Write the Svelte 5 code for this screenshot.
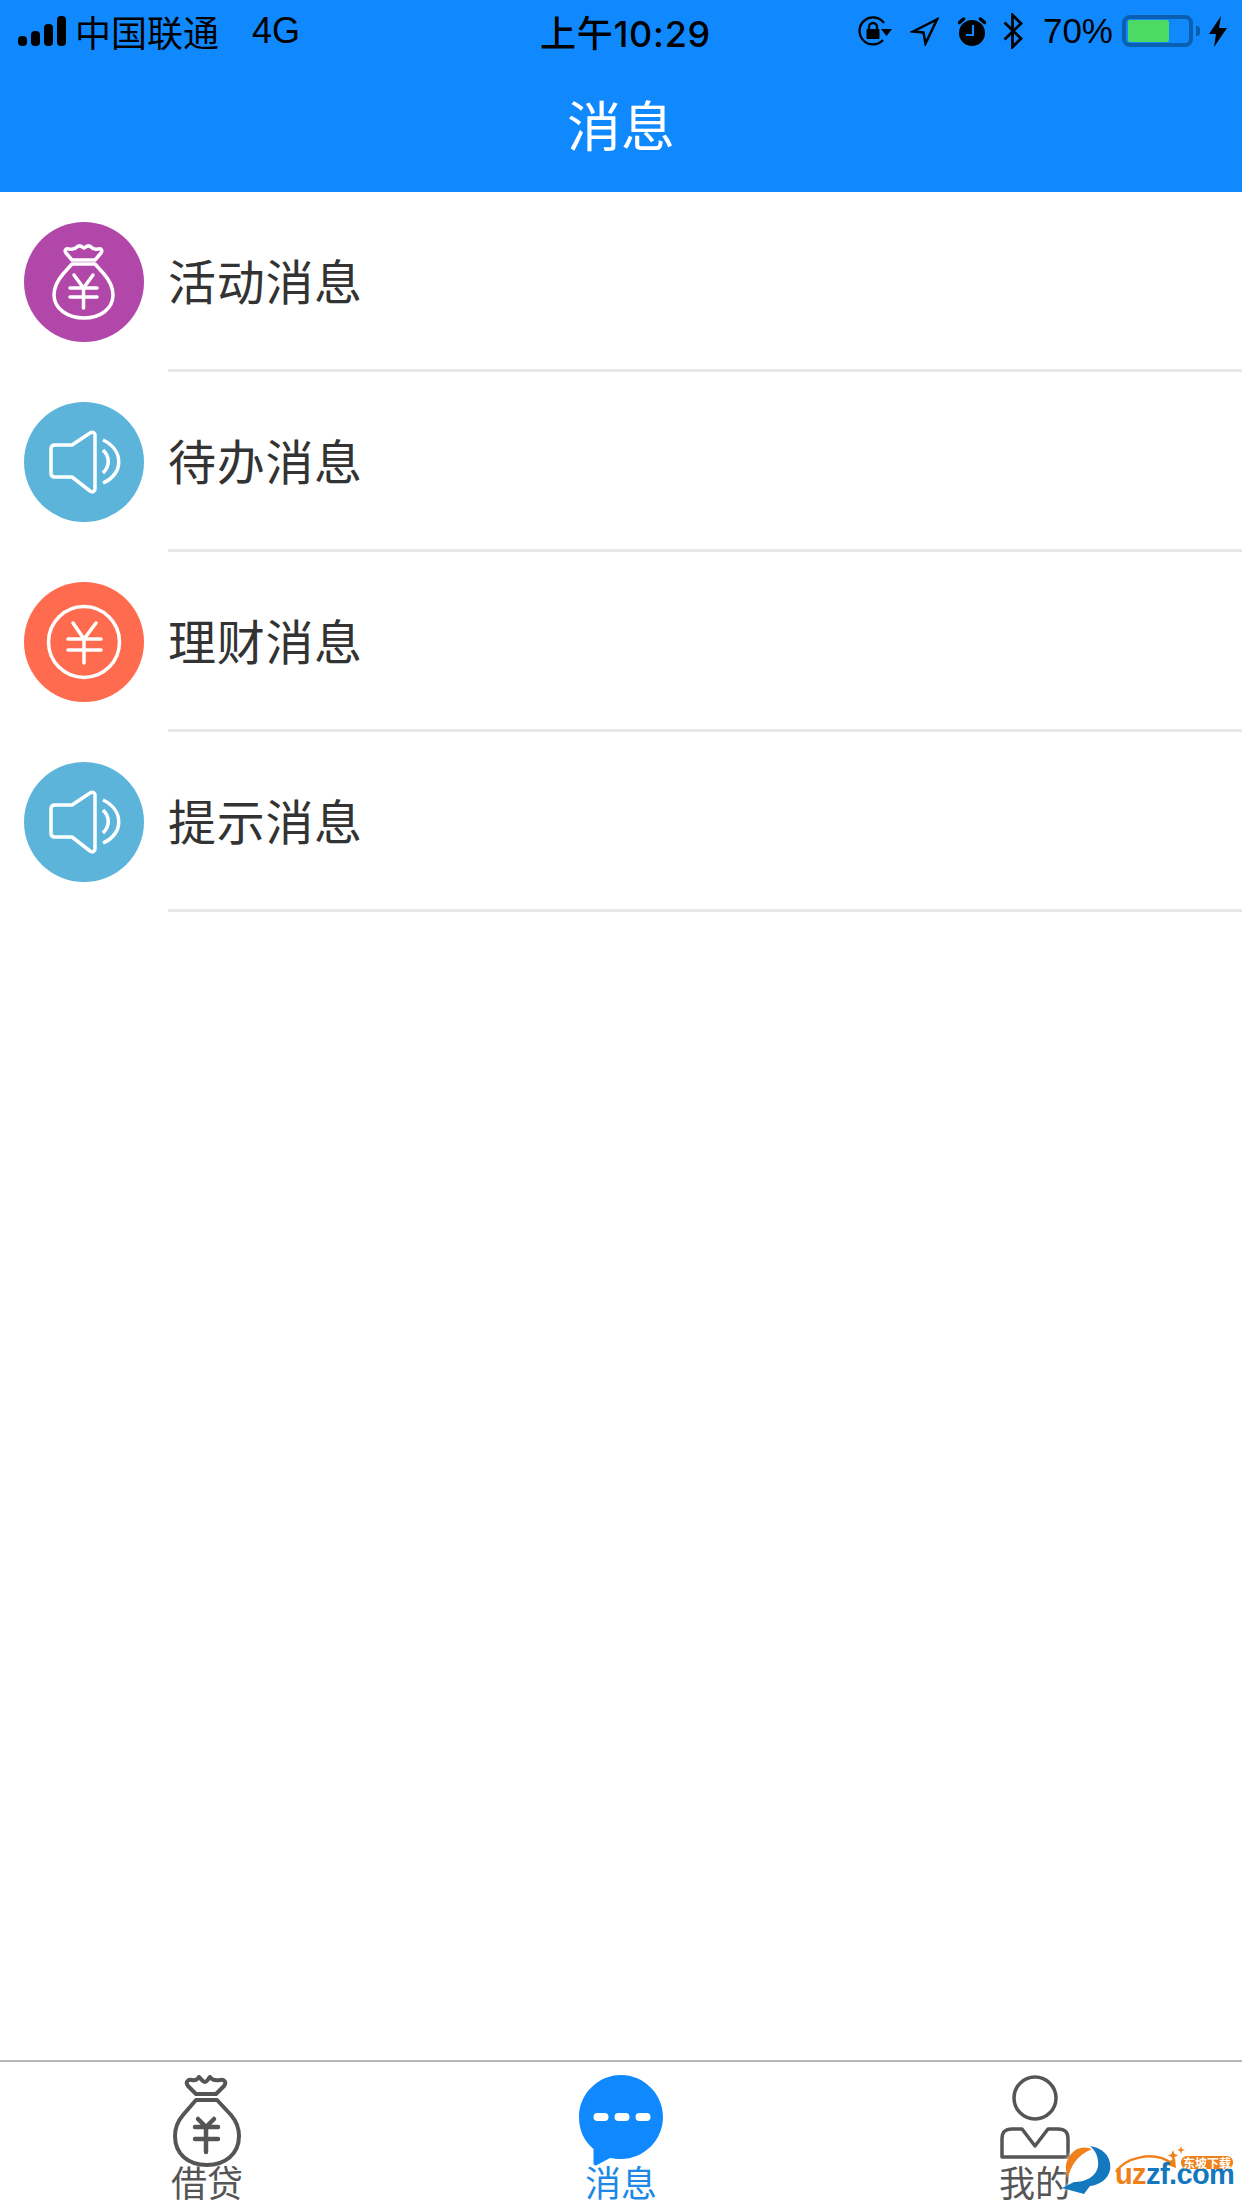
<script>
    const rows = [
        { label: "活动消息", color: "#b148a9", icon: "bag" },
        { label: "待办消息", color: "#5db4da", icon: "horn" },
        { label: "理财消息", color: "#ff6b4f", icon: "coin" },
        { label: "提示消息", color: "#5db4da", icon: "horn" }
    ];
</script>

<div class="page">
    <header class="top">
        <div class="status">
            <div class="status-left">
                <div class="signal">
                    <i style="height:10px"></i><i style="height:15px"></i><i style="height:22px"></i><i style="height:30px"></i>
                </div>
                <span class="carrier">中国联通</span>
                <span class="net">4G</span>
            </div>
            <div class="clock">上午10:29</div>
            <div class="status-right">
                <!-- rotation lock -->
                <svg width="34" height="30" viewBox="0 0 34 30">
                    <path d="M25 24A13.500 13.500 0 1 1 26 7" fill="none" stroke="#000" stroke-width="2.300"/>
                    <path d="M23 13h11l-5.500 7z" fill="#000"/>
                    <rect x="8.500" y="13" width="13" height="10" rx="1" fill="#000"/>
                    <path d="M11 14v-3a4 4 0 0 1 8 0v3" fill="none" stroke="#000" stroke-width="2.300"/>
                </svg>
                <!-- location -->
                <svg class="gap-loc" width="29" height="29" viewBox="0 0 29 29">
                    <path d="M3 14.500 27 2.500 15.500 26.500 13.500 15.500z" fill="none" stroke="#000" stroke-width="2.500"/>
                </svg>
                <!-- alarm -->
                <svg class="gap-alarm" width="28" height="29" viewBox="0 0 28 29">
                    <circle cx="14" cy="16" r="13" fill="#000"/>
                    <path d="M1.500 5.500 5.500 2 M26.500 5.500 22.500 2" stroke="#000" stroke-width="3.500" stroke-linecap="round"/>
                    <path d="M15 8v10H8" fill="none" stroke="#1089ff" stroke-width="2.200"/>
                </svg>
                <!-- bluetooth -->
                <svg class="gap-bt" width="20" height="36" viewBox="0 0 20 36">
                    <path d="M1.500 9.500 18 25.500 9.500 34V2L18 10.500 1.500 26.500" fill="none" stroke="#000" stroke-width="2.800"/>
                </svg>
                <span class="pct">70%</span>
                <div class="battery"><div class="battery-fill"></div></div>
                <div class="battery-cap"></div>
                <svg class="gap-bolt" width="18" height="31" viewBox="0 0 18 31">
                    <path d="M12 0 0 18H7L5 31 18 12H10z" fill="#000"/>
                </svg>
            </div>
        </div>
        <div class="title">消息</div>
    </header>

    <main class="list">
        {#each rows as row}
            <div class="row">
                <div class="avatar" style="background:{row.color}">
                    {#if row.icon === "bag"}
                        <svg width="120" height="120" viewBox="0 0 120 120" fill="none" stroke="#fff" stroke-width="3.500" stroke-linejoin="round" stroke-linecap="round">
                            <path d="M48 38 42 31C40 28 42 26 45 27 49 28 51 27 53 25 56 22 58 25 60 26 62 25 64 22 67 25 69 27 71 28 74 27 77 26 79 28 77 31L71 38z"/>
                            <path d="M48 42H71L80 52C86 59 89 65 89 73 89 87 76 96 60 96 44 96 30 87 30 73 30 65 33 59 39 52z"/>
                            <path d="M50 53 59.500 66 69 53M46 66H73M46 75H73M59.500 66V86"/>
                        </svg>
                    {:else if row.icon === "horn"}
                        <svg width="120" height="120" viewBox="0 0 120 120" fill="none" stroke="#fff" stroke-width="3.500" stroke-linejoin="round" stroke-linecap="round">
                            <path d="M31 43H48L66 31C69 29 71 31 71 33V87C71 89 69 91 66 89L48 75H31C28 75 27 73 27 71V47C27 45 28 43 31 43z"/>
                            <path d="M79 48C86 55 86 64 79 71" stroke-linecap="butt"/>
                            <path d="M79 38C100 48 100 72 79 81" stroke-linecap="butt"/>
                        </svg>
                    {:else}
                        <svg width="120" height="120" viewBox="0 0 120 120" fill="none" stroke="#fff" stroke-width="3.500" stroke-linecap="round">
                            <circle cx="60" cy="60" r="35.500"/>
                            <path d="M49 41 60 57 72 41M44 57H77M44 68H77M60 57V81"/>
                        </svg>
                    {/if}
                </div>
                <div class="label">{row.label}</div>
            </div>
        {/each}
    </main>

    <footer class="tabs">
        <div class="tab">
            <svg class="tab-icon" width="68" height="94" viewBox="0 0 68 94" fill="none" stroke="#555" stroke-width="4" stroke-linejoin="round" stroke-linecap="round">
                <path d="M23 19 15 11C12 7 15 4 19 5 22 6 24 5 26 2 28 4 30 7 32 7 34 7 35 4 37 2 39 5 42 6 47 5 51 4 54 7 51 11L43 19z"/>
                <path d="M23 25H44L58 40C64 47 66 53 66 61 66 79 52 90 34 90 15 90 2 79 2 61 2 53 4 47 10 40z"/>
                <path d="M25 44 33 52 41 44M22 52H45M22 64H45M33 52V77" stroke-width="4.500"/>
            </svg>
            <span>借贷</span>
        </div>
        <div class="tab active">
            <svg class="tab-icon" width="84" height="94" viewBox="0 0 84 94">
                <path d="M42 0C65 0 84 19 84 42 84 65 65 84 42 84 38 84 34 83.500 31 83L18 90C16 91 14.500 90 14.500 88V74C5 66 0 55 0 42 0 19 19 0 42 0z" fill="#1089ff"/>
                <rect x="14.500" y="38" width="15" height="8" rx="4" fill="#fff"/>
                <rect x="35.500" y="38" width="15" height="8" rx="4" fill="#fff"/>
                <rect x="56.500" y="38" width="15" height="8" rx="4" fill="#fff"/>
            </svg>
            <span>消息</span>
        </div>
        <div class="tab">
            <svg class="tab-icon" width="70" height="94" viewBox="0 -2 70 94" fill="none" stroke="#555" stroke-width="3.500">
                <circle cx="35" cy="21" r="21"/>
                <path d="M2 80V62C2 55 5 52 12 52H22L35 69 48 52H58C65 52 68 55 68 62V80z" stroke-linejoin="round"/>
            </svg>
            <span>我的</span>
        </div>
    </footer>

    <!-- site watermark over the corner -->
    <div class="mark">
        <svg class="mark-logo" width="50" height="50" viewBox="0 0 50 50">
            <path d="M28 0C42 2 50 12 48 24 46 33 38 39 28 40L22 48 0 42 12 36C22 36 34 32 36 20 37 11 33 4 28 0z" fill="#1378be"/>
            <path d="M15 3C7 8 3 16 4 24L6 32C9 20 14 10 30 3 25 1 20 1 15 3z" fill="#f08019"/>
        </svg>
        <div class="mark-text">
            <svg class="mark-swoosh" width="124" height="30" viewBox="0 0 124 30">
                <path d="M1 26C10 12 38 4 56 17" fill="none" stroke="#f08019" stroke-width="2.500"/>
                <path d="M50 18 60 12l1 10z" fill="#f08019"/>
                <path d="M58 4 59.500 8 63 9.500 59.500 11 58 15 56.500 11 53 9.500 56.500 8zM66 0 67 3 70 4 67 5 66 8 65 5 62 4 65 3z" fill="#f08019"/>
            </svg>
            <span class="mark-url"><b class="o">uz</b><b class="b">zf.com</b></span>
            <span class="mark-tag">东坡下载</span>
        </div>
    </div>
</div>

<style>
    :global(body) {
        margin: 0;
        background: #fff;
    }
    .page {
        position: relative;
        width: 1242px;
        height: 2208px;
        display: flex;
        flex-direction: column;
        overflow: hidden;
        font-family: "Noto Sans CJK SC", "Liberation Sans", sans-serif;
    }
    .top {
        height: 192px;
        background: #1089ff;
        flex: none;
    }
    .status {
        height: 62px;
        display: grid;
        grid-template-columns: 1fr auto 1fr;
        align-items: center;
        padding: 0 15px 0 18px;
        color: #000;
    }
    .status-left, .status-right {
        display: flex;
        align-items: center;
    }
    .status-right {
        justify-content: flex-end;
    }
    .signal {
        display: flex;
        align-items: flex-end;
        gap: 4px;
        height: 30px;
    }
    .signal i {
        display: block;
        width: 9px;
        background: #000;
        border-radius: 4px;
    }
    .carrier {
        margin-left: 9px;
        font-size: 36px;
        font-weight: 400;
    }
    .net {
        margin-left: 33px;
        font-family: "Liberation Sans", sans-serif;
        font-size: 36px;
    }
    .clock {
        margin-left: 6px;
        font-family: Inter, "Noto Sans CJK SC", sans-serif;
        font-size: 36px;
        font-weight: 500;
        letter-spacing: 0.7px;
    }
    .gap-loc { margin-left: 18px; }
    .gap-alarm { margin-left: 19px; }
    .gap-bt { margin-left: 17px; }
    .pct {
        margin-left: 20px;
        font-family: "Liberation Sans", sans-serif;
        font-size: 35px;
    }
    .battery {
        margin-left: 9px;
        width: 71px;
        height: 32px;
        box-sizing: border-box;
        border: 4px solid #0b5fb0;
        border-radius: 8px;
        padding: 1px 2px;
    }
    .battery-fill {
        width: 41px;
        height: 100%;
        background: #4cd964;
        border-radius: 2px;
    }
    .battery-cap {
        width: 4px;
        height: 10px;
        margin-left: 3px;
        background: #0b5fb0;
        border-radius: 0 3px 3px 0;
    }
    .gap-bolt { margin-left: 9px; }
    .title {
        text-align: center;
        color: #fff;
        font-size: 54px;
        font-weight: 400;
        line-height: 72px;
        margin-top: 26px;
    }
    .list {
        flex: 1;
    }
    .row {
        height: 180px;
        display: flex;
        align-items: center;
        position: relative;
    }
    .row::after {
        content: "";
        position: absolute;
        left: 168px;
        right: 0;
        bottom: 0;
        height: 3px;
        background: #e7e7e7;
    }
    .avatar {
        width: 120px;
        height: 120px;
        margin-left: 24px;
        border-radius: 50%;
        flex: none;
    }
    .avatar svg { display: block; }
    .label {
        margin: -7px 0 0 24px;
        font-size: 48px;
        font-weight: 400;
        letter-spacing: 0.7px;
        color: #333;
    }
    .tabs {
        flex: none;
        height: 146px;
        border-top: 2px solid #b7b7b7;
        display: grid;
        grid-template-columns: repeat(3, 1fr);
    }
    .tab {
        display: flex;
        flex-direction: column;
        align-items: center;
        color: #555;
        font-size: 36px;
        font-weight: 400;
        padding-top: 13px;
        min-height: 0;
    }
    .tab span {
        line-height: 40px;
        margin-top: -8px;
    }
    .tab-icon { display: block; }
    .tab.active { color: #1e88e8; }
    .mark {
        position: absolute;
        left: 1062px;
        top: 2146px;
        display: flex;
    }
    .mark-logo {
        filter: drop-shadow(0 0 2px #fff);
    }
    .mark-text {
        position: relative;
        width: 124px;
        height: 46px;
        margin-left: 3px;
    }
    .mark-swoosh {
        position: absolute;
        left: 0;
        top: 0;
    }
    .mark-tag {
        position: absolute;
        right: 6px;
        top: 10px;
        background: #f08019;
        color: #fff;
        font-size: 12px;
        font-weight: 700;
        line-height: 13px;
        padding: 0 2px;
        border-radius: 6px;
    }
    .mark-url {
        position: absolute;
        left: 0;
        top: 15px;
        font-family: "Liberation Sans", sans-serif;
        font-size: 29px;
        line-height: 26px;
        letter-spacing: -0.6px;
        white-space: nowrap;
    }
    .mark-url b { font-weight: 700; }
    .o { color: #f08019; }
    .b { color: #1378be; }
</style>
